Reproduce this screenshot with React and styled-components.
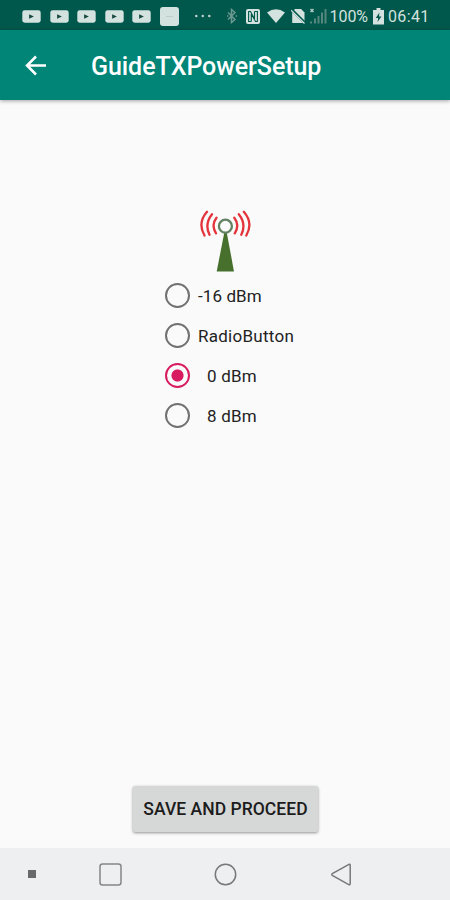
import React, { useState } from "react";
import styled, { createGlobalStyle } from "styled-components";

const GlobalStyle = createGlobalStyle`
  * { box-sizing: border-box; }
  body { margin: 0; background: #fafafa; font-family: Roboto, sans-serif; }
  svg { display: block; flex: none; }
`;

const Screen = styled.div`
  width: 450px;
  height: 900px;
  display: flex;
  flex-direction: column;
  background: #fafafa;
  overflow: hidden;
`;

const StatusBar = styled.header`
  height: 30px;
  flex: none;
  display: flex;
  align-items: center;
  justify-content: space-between;
  padding: 2px 20px 0 22px;
  background: #00574b;
  color: #d3e2df;
`;

const Notifications = styled.div`
  display: flex;
  align-items: center;
  gap: 8.5px;
`;

const SystemStatus = styled.div`
  display: flex;
  align-items: center;
`;

const StatusIcon = styled.svg`
  margin-right: ${(p) => p.$gap || 0}px;
`;

const StatusText = styled.span`
  width: ${(p) => p.$width}px;
  margin-right: ${(p) => p.$gap || 0}px;
  padding-top: 2px;
  font-size: 16px;
  line-height: 20px;
  letter-spacing: ${(p) => p.$spacing || 0}px;
  white-space: nowrap;
`;

const AppBar = styled.div`
  height: 70px;
  flex: none;
  display: flex;
  align-items: center;
  padding: 0 24px;
  background: #008577;
  color: #fff;
  box-shadow: 0 1px 4px rgba(0, 0, 0, 0.35);
`;

const BackButton = styled.button`
  width: 24px;
  height: 24px;
  margin-top: 2px;
  padding: 0;
  border: 0;
  background: none;
  color: inherit;
`;

const Title = styled.h1`
  margin: 4px 0 0 43px;
  font-size: 25px;
  line-height: 32px;
  font-weight: 500;
  letter-spacing: -0.06px;
  white-space: nowrap;
`;

const Content = styled.main`
  flex: 1;
  display: flex;
  flex-direction: column;
  align-items: center;
  padding: 109px 0 16px;
`;

const RadioGroup = styled.div`
  width: 122px;
  margin: 3px 0 auto;
  display: flex;
  flex-direction: column;
`;

const RadioRow = styled.label`
  height: 40px;
  padding-left: 1px;
  display: flex;
  align-items: center;
`;

const RadioInput = styled.input`
  appearance: none;
  flex: none;
  width: 25px;
  height: 25px;
  margin: 0;
  border: 2px solid ${(p) => (p.checked ? "#d81b60" : "#717171")};
  border-radius: 50%;
  background: ${(p) =>
    p.checked ? "radial-gradient(circle, #d81b60 5.6px, transparent 6.5px)" : "transparent"};
`;

const RadioLabel = styled.span`
  margin: 2px 0 0 ${(p) => (p.$indented ? 17 : 8)}px;
  font-size: 17px;
  line-height: 22px;
  letter-spacing: ${(p) => p.$spacing}px;
  color: #222;
  white-space: nowrap;
`;

const SaveButton = styled.button`
  width: 185px;
  height: 46px;
  margin-left: 1px;
  padding: 0;
  border: 0;
  border-radius: 2px;
  background: #d6d7d7;
  box-shadow: 0 1px 3px rgba(0, 0, 0, 0.42);
  color: #1c1c1c;
  font: 500 17.5px/44px Roboto, sans-serif;
  letter-spacing: 0.04px;
  white-space: nowrap;
`;

const NavBar = styled.nav`
  height: 52px;
  flex: none;
  display: flex;
  align-items: center;
  padding-left: 28px;
  background: #eeeff1;
`;

const NavIcon = styled.svg`
  margin-right: ${(p) => p.$gap || 0}px;
`;

const VideoIcon = () => (
  <svg width="19" height="13" viewBox="0 0 19 13">
    <rect x=".3" y=".3" width="18.4" height="12.4" rx="2.4" fill="#d3e2df" />
    <path d="M7.1 4.2v4.6l4.8-2.3z" fill="#17483f" />
  </svg>
);

const Antenna = () => (
  <svg width="53" height="63" viewBox="0 0 53 63">
    <path d="M25.2 24h2.6l7.2 38.5H17.7z" fill="#47702c" />
    <circle cx="26.4" cy="17.2" r="6.5" fill="#fafafa" stroke="#628263" strokeWidth="2.3" />
    <g fill="none" stroke="#e4343b" strokeWidth="2.3" strokeLinecap="round">
      <path d="M17.5 8.7Q11.8 16 17 24.3M13 5.2Q5.2 15 10.5 25.8M8 2.8Q-1.8 14 5.5 26.5" />
      <path d="M35.3 8.7Q41 16 35.8 24.3M39.8 5.2Q47.6 15 42.3 25.8M44.8 2.8Q54.6 14 47.3 26.5" />
    </g>
  </svg>
);

const options = [
  { label: "-16 dBm", spacing: 0.1 },
  { label: "RadioButton", spacing: 0.27 },
  { label: "0 dBm", spacing: 0.2, indented: true },
  { label: "8 dBm", spacing: 0.2, indented: true },
];

export default function App() {
  const [power, setPower] = useState("0 dBm");

  return (
    <Screen>
      <GlobalStyle />
      <StatusBar>
        <Notifications>
          {[0, 1, 2, 3, 4].map((n) => <VideoIcon key={n} />)}
          <svg width="19" height="19" viewBox="0 0 19 19">
            <rect width="19" height="19" rx="3" fill="#d3e2df" />
            <path d="M6 9.5h7" stroke="#bdcfcb" />
          </svg>
          <StatusIcon width="34" height="4" viewBox="0 0 34 4" fill="#b9cfcb">
            <circle cx="9.3" cy="2" r="1.3" />
            <circle cx="15.8" cy="2" r="1.3" />
            <circle cx="22.3" cy="2" r="1.3" />
          </StatusIcon>
        </Notifications>
        <SystemStatus>
          <StatusIcon $gap={9} width="10" height="16" viewBox="0 0 10 16" fill="none" stroke="#6c9991" strokeWidth="1.5">
            <path d="M1 4.5l7 7-3.5 3V1.5L8 4.5l-7 7" />
            <path d="M0 8h1.4M8.6 8H10" />
          </StatusIcon>
          <StatusIcon $gap={7} width="14" height="15" viewBox="0 0 14 15">
            <rect width="14" height="15" rx="2" fill="#d3e2df" />
            <path d="M2.3 2.5h2.2l4 7.5V2.5M11.7 12.5H9.5L5.3 5v7.5M2.6 2.5v10h2.7M8.5 2.5h2.9v10" fill="none" stroke="#00574b" strokeWidth="1.1" />
          </StatusIcon>
          <StatusIcon $gap={6} width="18" height="14" viewBox="0 0 18 14">
            <path d="M0 3.5Q9-2.8 18 3.5L9 14z" fill="#d3e2df" />
          </StatusIcon>
          <StatusIcon $gap={4} width="15" height="16" viewBox="0 0 15 16">
            <path d="M4 1h6l3.5 3.5V15H1.2V4z" fill="#d3e2df" />
            <path d="M0 1l14 14" stroke="#00574b" strokeWidth="2.8" />
            <path d="M0 2.2L13.5 15.5" stroke="#d3e2df" strokeWidth="1.3" />
          </StatusIcon>
          <StatusIcon $gap={3} width="17" height="16" viewBox="0 0 17 16">
            <path d="M1 15.5v-2M5 15.5v-5M8.5 15.5V8M12 15.5V4.5M15.5 15.5V1" stroke="#55877f" strokeWidth="2" />
            <path d="M.5 1l3 3M3.5 1l-3 3" stroke="#afc9c5" strokeWidth="1.5" />
          </StatusIcon>
          <StatusText $width={39} $gap={4} $spacing={-0.05}>100%</StatusText>
          <StatusIcon $gap={4.5} width="11" height="17" viewBox="0 0 11 17">
            <path d="M3.5 0h4v2H11v14.5H0V2h3.5z" fill="#d3e2df" />
            <path d="M6.4 4.5L2.8 10h2.4L4.5 14l4-5.5H6z" fill="#00574b" />
          </StatusIcon>
          <StatusText $width={42} $spacing={0.35}>06:41</StatusText>
        </SystemStatus>
      </StatusBar>

      <AppBar>
        <BackButton aria-label="Back">
          <svg width="24" height="24" viewBox="0 0 24 24" fill="none" stroke="currentColor" strokeWidth="2.5">
            <path d="M22 11.5H4M12 2.5l-9 9 9 9" />
          </svg>
        </BackButton>
        <Title>GuideTXPowerSetup</Title>
      </AppBar>

      <Content>
        <Antenna />
        <RadioGroup role="radiogroup">
          {options.map(({ label, spacing, indented }) => (
            <RadioRow key={label}>
              <RadioInput type="radio" name="power" checked={power === label} onChange={() => setPower(label)} />
              <RadioLabel $spacing={spacing} $indented={indented}>{label}</RadioLabel>
            </RadioRow>
          ))}
        </RadioGroup>
        <SaveButton>SAVE AND PROCEED</SaveButton>
      </Content>

      <NavBar>
        <NavIcon $gap={63} width="8" height="8" viewBox="0 0 8 8">
          <path d="M0 0h8v8H0z" fill="#68696b" />
        </NavIcon>
        <NavIcon $gap={92} width="23" height="23" viewBox="0 0 23 23">
          <rect x="1" y="1" width="21" height="21" rx="2.5" fill="none" stroke="#858688" strokeWidth="1.5" />
        </NavIcon>
        <NavIcon $gap={94} width="23" height="23" viewBox="0 0 23 23">
          <circle cx="11.5" cy="11.5" r="10.2" fill="none" stroke="#77787a" strokeWidth="1.5" />
        </NavIcon>
        <NavIcon width="21" height="23" viewBox="0 0 21 23">
          <path d="M18 1.3L1.3 10.5Q.2 11.4 1.3 12.3L17.7 21.6Q19.2 22.2 19.2 20.5V2.2Q19.2.8 18 1.3z" fill="none" stroke="#77787a" strokeWidth="1.5" />
        </NavIcon>
      </NavBar>
    </Screen>
  );
}
